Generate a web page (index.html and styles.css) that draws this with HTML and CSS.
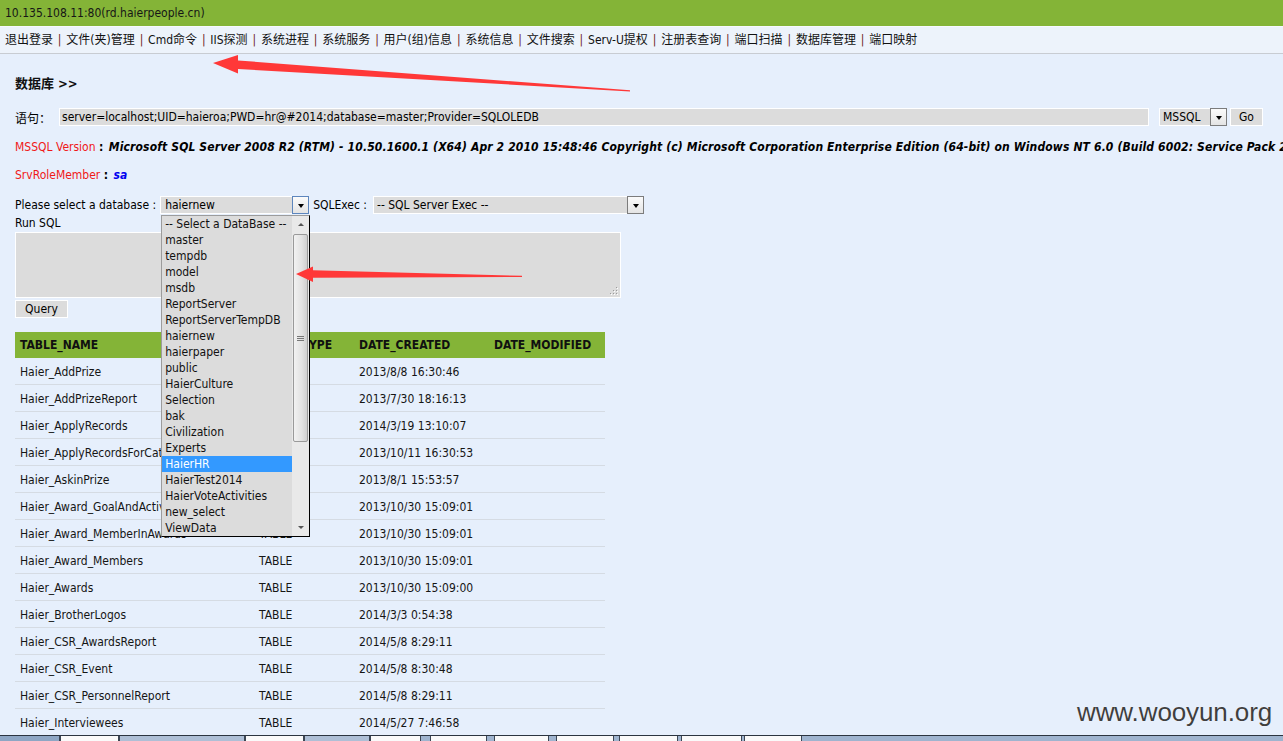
FILE: index.html
```html
<!DOCTYPE html>
<html lang="zh-CN">
<head>
<meta charset="utf-8">
<title>数据库管理</title>
<link rel="stylesheet" href="styles.css">
</head>
<body>
<div class="topbar">10.135.108.11:80(rd.haierpeople.cn)</div>
<div class="nav">
  <span>退出登录</span><span class="sep">|</span><span>文件(夹)管理</span><span class="sep">|</span><span>Cmd命令</span><span class="sep">|</span><span>IIS探测</span><span class="sep">|</span><span>系统进程</span><span class="sep">|</span><span>系统服务</span><span class="sep">|</span><span>用户(组)信息</span><span class="sep">|</span><span>系统信息</span><span class="sep">|</span><span>文件搜索</span><span class="sep">|</span><span>Serv-U提权</span><span class="sep">|</span><span>注册表查询</span><span class="sep">|</span><span>端口扫描</span><span class="sep">|</span><span>数据库管理</span><span class="sep">|</span><span>端口映射</span>
</div>

<div class="main">
  <div class="title">数据库 &gt;&gt;</div>

  <div class="stmt">
    <span class="stmt-label">语句：</span>
    <div class="field conn">server=localhost;UID=haieroa;PWD=hr@#2014;database=master;Provider=SQLOLEDB</div>
    <div class="select type"><span class="sel-text">MSSQL</span><span class="arrow dark"><i></i></span></div>
    <div class="btn go">Go</div>
  </div>

  <div class="info"><span class="red">MSSQL Version</span> <b>:</b> <b class="bi">Microsoft SQL Server 2008 R2 (RTM) - 10.50.1600.1 (X64) Apr 2 2010 15:48:46 Copyright (c) Microsoft Corporation Enterprise Edition (64-bit) on Windows NT 6.0 (Build 6002: Service Pack 2)</b></div>

  <div class="info role"><span class="red">SrvRoleMember</span> <b>:</b> <b class="bi blue">sa</b></div>

  <div class="dbrow">
    <span class="lbl">Please select a database :</span>
    <div class="select db">
      <span class="sel-text">haiernew</span><span class="arrow focus"><i></i></span>
      <div class="dropdown">
        <ul class="opts">
          <li>-- Select a DataBase --</li>
          <li>master</li>
          <li>tempdb</li>
          <li>model</li>
          <li>msdb</li>
          <li>ReportServer</li>
          <li>ReportServerTempDB</li>
          <li>haiernew</li>
          <li>haierpaper</li>
          <li>public</li>
          <li>HaierCulture</li>
          <li>Selection</li>
          <li>bak</li>
          <li>Civilization</li>
          <li>Experts</li>
          <li class="hl">HaierHR</li>
          <li>HaierTest2014</li>
          <li>HaierVoteActivities</li>
          <li>new_select</li>
          <li>ViewData</li>
        </ul>
        <div class="sbar">
          <div class="sb-btn"><i class="up"></i></div>
          <div class="sb-track">
            <div class="thumb"><span class="grip"></span></div>
          </div>
          <div class="sb-btn"><i class="down"></i></div>
        </div>
      </div>
    </div>
    <span class="lbl exec-lbl">SQLExec :</span>
    <div class="select exec"><span class="sel-text">-- SQL Server Exec --</span><span class="arrow dark"><i></i></span></div>
  </div>

  <div class="runsql">Run SQL</div>
  <div class="textarea">
    <svg class="grip-corner" width="8" height="8" viewBox="0 0 8 8">
      <rect x="6" y="0" width="1" height="1" fill="#9a9a9a"/>
      <rect x="3" y="3" width="1" height="1" fill="#9a9a9a"/>
      <rect x="6" y="3" width="1" height="1" fill="#9a9a9a"/>
      <rect x="0" y="6" width="1" height="1" fill="#9a9a9a"/>
      <rect x="3" y="6" width="1" height="1" fill="#9a9a9a"/>
      <rect x="6" y="6" width="1" height="1" fill="#9a9a9a"/>
      <rect x="7" y="1" width="1" height="1" fill="#fff"/>
      <rect x="4" y="4" width="1" height="1" fill="#fff"/>
      <rect x="7" y="4" width="1" height="1" fill="#fff"/>
      <rect x="1" y="7" width="1" height="1" fill="#fff"/>
      <rect x="4" y="7" width="1" height="1" fill="#fff"/>
      <rect x="7" y="7" width="1" height="1" fill="#fff"/>
    </svg>
  </div>
  <div class="btn query">Query</div>

  <table class="grid">
    <thead>
      <tr><th class="c1">TABLE_NAME</th><th class="c2">TABLE_TYPE</th><th class="c3">DATE_CREATED</th><th class="c4">DATE_MODIFIED</th></tr>
    </thead>
    <tbody>
      <tr><td>Haier_AddPrize</td><td>TABLE</td><td>2013/8/8 16:30:46</td><td></td></tr>
      <tr><td>Haier_AddPrizeReport</td><td>TABLE</td><td>2013/7/30 18:16:13</td><td></td></tr>
      <tr><td>Haier_ApplyRecords</td><td>TABLE</td><td>2014/3/19 13:10:07</td><td></td></tr>
      <tr><td>Haier_ApplyRecordsForCatalog</td><td>TABLE</td><td>2013/10/11 16:30:53</td><td></td></tr>
      <tr><td>Haier_AskinPrize</td><td>TABLE</td><td>2013/8/1 15:53:57</td><td></td></tr>
      <tr><td>Haier_Award_GoalAndActivity</td><td>TABLE</td><td>2013/10/30 15:09:01</td><td></td></tr>
      <tr><td>Haier_Award_MemberInAwards</td><td>TABLE</td><td>2013/10/30 15:09:01</td><td></td></tr>
      <tr><td>Haier_Award_Members</td><td>TABLE</td><td>2013/10/30 15:09:01</td><td></td></tr>
      <tr><td>Haier_Awards</td><td>TABLE</td><td>2013/10/30 15:09:00</td><td></td></tr>
      <tr><td>Haier_BrotherLogos</td><td>TABLE</td><td>2014/3/3 0:54:38</td><td></td></tr>
      <tr><td>Haier_CSR_AwardsReport</td><td>TABLE</td><td>2014/5/8 8:29:11</td><td></td></tr>
      <tr><td>Haier_CSR_Event</td><td>TABLE</td><td>2014/5/8 8:30:48</td><td></td></tr>
      <tr><td>Haier_CSR_PersonnelReport</td><td>TABLE</td><td>2014/5/8 8:29:11</td><td></td></tr>
      <tr><td>Haier_Interviewees</td><td>TABLE</td><td>2014/5/27 7:46:58</td><td></td></tr>
    </tbody>
  </table>
</div>

<div class="taskbar">
  <span class="tb t1"></span><span class="tb w t2"></span><span class="tb t3"></span><span class="tb w t4"></span><span class="tb t5"></span><span class="tb w t6"></span><span class="tb w t7"></span><span class="tb w t8"></span><span class="tb w t9"></span><span class="tb w t10"></span><span class="tb w t11"></span><span class="tb w t12"></span>
</div>

<div class="watermark">www.wooyun.org</div>

<svg class="arrows" width="1283" height="741" viewBox="0 0 1283 741">
  <polygon fill="#ff3838" points="213,63 238,55 238,60.5 630,90.3 630,91.5 238,69 238,73.5"/>
  <polygon fill="#ff3838" points="296,274 313,266.5 313,270.3 522,275.8 522,277 313,277.8 313,282"/>
</svg>
</body>
</html>
```

FILE: styles.css
```css
html, body {
  margin: 0;
  height: 741px;
  overflow: hidden;
}

body {
  position: relative;
  background: #e6effc;
  color: #000;
  font: 12px "DejaVu Sans Condensed", "Noto Sans CJK SC", sans-serif;
}

.topbar {
  height: 26px;
  line-height: 26px;
  padding-left: 5px;
  background: #84b437;
  color: #161616;
}

.nav {
  height: 26px;
  line-height: 27px;
  padding-left: 5px;
  background: #edf3fb;
  border-top: 1px solid #f6f9fe;
  border-bottom: 1px solid #c8ccd2;
  white-space: nowrap;
  color: #111;
}

.nav .sep {
  color: #6d1c24;
  margin: 0 4.85px;
}

.main {
  padding: 0 15px;
}

.title {
  margin-top: 22px;
  line-height: 16px;
  font-size: 13px;
  font-weight: bold;
  color: #111;
}

.stmt {
  display: flex;
  align-items: center;
  margin-top: 16px;
  height: 18px;
}

.stmt-label {
  width: 44px;
}

.field,
.select,
.btn,
.textarea {
  box-sizing: border-box;
  background: #dcdcdc;
  border: 1px solid #fff;
}

.field {
  height: 18px;
  line-height: 16px;
  padding-left: 2px;
  white-space: nowrap;
  overflow: hidden;
}

.conn {
  width: 1090px;
}

.select {
  position: relative;
  display: flex;
  align-items: center;
  height: 18px;
  line-height: 16px;
  padding-left: 3px;
}

.sel-text {
  flex: 1;
  white-space: nowrap;
}

.arrow {
  box-sizing: border-box;
  width: 17px;
  height: 18px;
  margin: -1px -1px -1px 0;
  display: flex;
  align-items: center;
  justify-content: center;
  background: linear-gradient(#fbfbfb, #e4e4e4);
  border: 1px solid #7c7c7c;
}

.arrow.focus {
  border-color: #5d86bd;
}

.arrow i {
  width: 0;
  height: 0;
  border-left: 3.5px solid transparent;
  border-right: 3.5px solid transparent;
  border-top: 4px solid #000;
  margin-top: 1px;
}

.type {
  width: 68px;
  margin-left: 10px;
}

.btn {
  height: 18px;
  line-height: 16px;
  text-align: center;
}

.go {
  width: 33px;
  margin-left: 3px;
}

.info {
  margin-top: 13px;
  line-height: 16px;
  white-space: nowrap;
}

.info.role {
  margin-top: 12px;
}

.red {
  color: #f01818;
}

.bi {
  font-style: italic;
  font-weight: bold;
  margin-left: 2px;
  letter-spacing: 0.14px;
}

.blue {
  color: #0000f0;
}

.dbrow {
  display: flex;
  align-items: center;
  margin-top: 13px;
  height: 18px;
}

.lbl {
  white-space: nowrap;
}

.db {
  width: 149px;
  margin-left: 4px;
  padding-left: 4px;
}

.exec-lbl {
  margin-left: 4px;
}

.exec {
  width: 271px;
  margin-left: 6px;
}

.dropdown {
  position: absolute;
  left: 0;
  top: 18px;
  width: 149px;
  height: 322px;
  box-sizing: border-box;
  display: flex;
  background: #dcdcdc;
  border: 1px solid #000;
  border-left-color: #9c9c9c;
  border-top-color: #9c9c9c;
  z-index: 2;
}

.opts {
  flex: 1;
  list-style: none;
  margin: 0;
  padding: 0;
}

.opts li {
  height: 16px;
  line-height: 16px;
  padding-left: 3px;
  white-space: nowrap;
  color: #111;
}

.opts li.hl {
  background: #3399ff;
  color: #fff;
}

.sbar {
  width: 17px;
  display: flex;
  flex-direction: column;
  background: #e9e9e9;
}

.sb-btn {
  height: 17px;
  display: flex;
  align-items: center;
  justify-content: center;
}

.sb-btn i {
  width: 0;
  height: 0;
  border-left: 3px solid transparent;
  border-right: 3px solid transparent;
}

.sb-btn i.up {
  border-bottom: 3px solid #555;
}

.sb-btn i.down {
  border-top: 3px solid #555;
}

.sb-track {
  flex: 1;
}

.thumb {
  box-sizing: border-box;
  height: 208px;
  margin: 1px 1px 0 1px;
  border: 1px solid #9a9a9a;
  border-radius: 2px;
  background: linear-gradient(to right, #f2f2f2, #e2e2e2 60%, #cfcfcf);
  display: flex;
  align-items: center;
  justify-content: center;
}

.grip {
  width: 7px;
  height: 5px;
  border-top: 1px solid #777;
  border-bottom: 1px solid #777;
  box-sizing: border-box;
  background: linear-gradient(transparent 1px, #777 1px, #777 2px, transparent 2px);
}

.runsql {
  margin-top: 1px;
  line-height: 16px;
}

.textarea {
  margin-top: 1px;
  width: 606px;
  height: 66px;
  display: flex;
  justify-content: flex-end;
  align-items: flex-end;
  padding: 0 2px 2px 0;
}

.grip-corner {
  display: block;
}

.query {
  width: 53px;
  margin-top: 2px;
}

.grid {
  margin-top: 14px;
  width: 590px;
  border-collapse: collapse;
  table-layout: fixed;
}

.grid th {
  height: 26px;
  padding: 0 0 0 5px;
  background: #84b437;
  text-align: left;
  font-weight: bold;
  color: #101010;
}

.grid .c1 { width: 234px; }
.grid .c2 { width: 95px; }
.grid .c3 { width: 130px; }

.grid td {
  height: 25px;
  padding: 1px 0 0 5px;
  border-bottom: 1px solid #d5dbe3;
  white-space: nowrap;
  overflow: hidden;
  color: #151515;
}

.taskbar {
  position: fixed;
  left: 0;
  right: 0;
  bottom: 0;
  height: 5px;
  display: flex;
  background: #9fb4cf;
  border-top: 1px solid #2b3440;
}

.tb {
  height: 5px;
  box-sizing: border-box;
  border-left: 1px solid #3c4654;
  border-right: 1px solid #3c4654;
  background: #aebfd6;
}

.tb.w {
  background: #fafafa;
}

.t1 { width: 60px; border-left: 0; background: #8ea6c4; }
.t2 { width: 59px; }
.t3 { width: 126px; }
.t4 { width: 59px; }
.t5 { width: 66px; }
.t6 { width: 51px; }
.t7 { width: 57px; margin-left: 9px; }
.t8 { width: 55px; margin-left: 7px; }
.t9 { width: 58px; margin-left: 7px; }
.t10 { width: 59px; margin-left: 5px; }
.t11 { width: 61px; margin-left: 3px; }
.t12 { width: 58px; margin-left: 2px; }

.watermark {
  position: absolute;
  left: 1077px;
  top: 697px;
  font: 26px "Liberation Sans", Arial, sans-serif;
  line-height: 30px;
  color: #3f3f3f;
  text-shadow: 0 0 1px #fff;
  letter-spacing: -0.1px;
}

.arrows {
  position: absolute;
  left: 0;
  top: 0;
  z-index: 5;
  pointer-events: none;
}
```
